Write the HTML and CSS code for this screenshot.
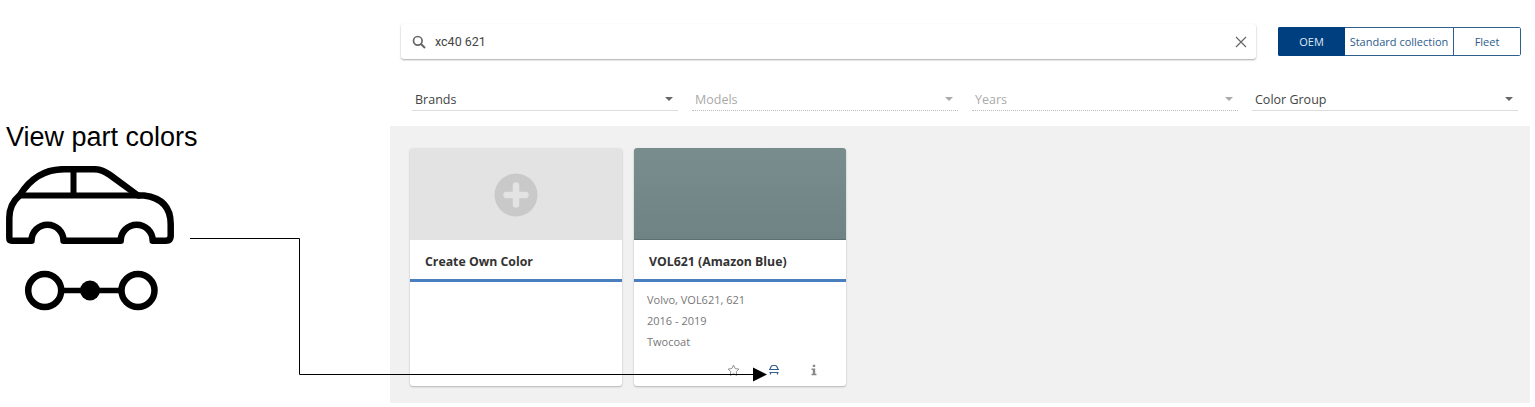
FILE: index.html
```html
<!DOCTYPE html>
<html lang="en">
<head>
  <meta charset="UTF-8">
  <title>View part colors</title>
  <link rel="stylesheet" href="styles.css">
</head>
<body>

<div class="page">
  <aside class="callout">
    <h2>View part colors</h2>
    <svg class="callout-car" viewBox="0 0 170 80" width="170" height="80">
      <path d="M25.500 74.700H6Q3.300 74.700 3.300 72V52Q3.300 38 14 29Q30 3.200 58 3.200H88Q96 3.200 104 9L132 29.500H138Q164.700 33 164.700 58V70Q164.700 74.700 160 74.700H146.700A16 16 0 0 0 114.700 74.700H57.500A16 16 0 0 0 25.500 74.700Z" fill="none" stroke="#000" stroke-width="6.500" stroke-linejoin="round"/>
      <path d="M13 29.500H134M67.500 3V30" fill="none" stroke="#000" stroke-width="6"/>
    </svg>
    <svg class="callout-parts" viewBox="0 0 136 42" width="136" height="42">
      <circle cx="20.700" cy="20.500" r="16.500" fill="none" stroke="#000" stroke-width="6.500"/>
      <circle cx="114" cy="20.500" r="16.500" fill="none" stroke="#000" stroke-width="6.500"/>
      <path d="M37 20.500H98" stroke="#000" stroke-width="5.500"/>
      <circle cx="66" cy="20.500" r="10"/>
    </svg>
  </aside>

  <main class="main">
    <div class="topbar">
      <div class="search">
        <svg class="search-icon" viewBox="0 0 14 14" width="14" height="14">
          <circle cx="5.800" cy="5.800" r="4.300" fill="none" stroke="#666" stroke-width="1.700"/>
          <path d="M9 9l4 4" stroke="#666" stroke-width="1.900"/>
        </svg>
        <span class="search-text">xc40 621</span>
        <svg class="search-clear" viewBox="0 0 12 12" width="12" height="12">
          <path d="M1 1l10 10M11 1L1 11" stroke="#666" stroke-width="1.200"/>
        </svg>
      </div>
      <div class="toggle">
        <button class="toggle-btn oem active">OEM</button>
        <button class="toggle-btn standard">Standard collection</button>
        <button class="toggle-btn fleet">Fleet</button>
      </div>
    </div>

    <div class="filters">
      <div class="filter"><span>Brands</span><i class="caret"></i></div>
      <div class="filter disabled"><span>Models</span><i class="caret"></i></div>
      <div class="filter disabled"><span>Years</span><i class="caret"></i></div>
      <div class="filter"><span>Color Group</span><i class="caret"></i></div>
    </div>

    <section class="results">
      <article class="card">
        <div class="swatch swatch-new">
          <svg viewBox="0 0 44 44" width="44" height="44">
            <circle cx="22" cy="22" r="21.500" fill="#c9c9c9"/>
            <path d="M22 12.500V31.500M12.500 22H31.500" stroke="#e3e3e3" stroke-width="6.500" stroke-linecap="round"/>
          </svg>
        </div>
        <h3 class="card-title">Create Own Color</h3>
      </article>

      <article class="card">
        <div class="swatch swatch-blue"></div>
        <h3 class="card-title title-blue">VOL621 (Amazon Blue)</h3>
        <div class="card-info">
          <p>Volvo, VOL621, 621</p>
          <p>2016 - 2019</p>
          <p>Twocoat</p>
        </div>
        <div class="card-actions">
          <svg class="action-star" viewBox="0 0 14 14" width="13" height="13">
            <path d="M7 1.200l1.800 3.700 4 .6-2.900 2.800.7 4L7 10.400l-3.600 1.900.7-4L1.200 5.500l4-.6z" fill="none" stroke="#888" stroke-width="1"/>
          </svg>
          <svg class="action-car" viewBox="0 0 12 12" width="12" height="12">
            <path d="M2 5L3.200 2.500Q3.800 1.500 5 1.500H7Q8.200 1.500 8.800 2.500L10 5M1 5.500H11M1.500 8.500H10.500M2.500 8V10.500M9.500 8V10.500" fill="none" stroke="#2f5f8f" stroke-width="1.200"/>
          </svg>
          <svg class="action-info" viewBox="0 0 8 12" width="8" height="12">
            <path d="M2.800 .8h2.400v2.200H2.800zM1.500 4.500h3.700v5.200h1.300v1.500h-5V9.700h1.300V6H1.500z" fill="#888"/>
          </svg>
        </div>
      </article>
    </section>
  </main>
</div>

<svg class="connector" viewBox="0 0 1535 407" width="1535" height="407">
  <path d="M190 238.500H299.500V374.500H760" fill="none" stroke="#000" stroke-width="1"/>
  <path d="M753 367.500L767 374.500 753 381.500Z"/>
</svg>

</body>
</html>
```

FILE: styles.css
```css
html, body {
  height: 100%;
}
body {
  margin: 0;
  background: #fff;
  font-family: 'Open Sans', sans-serif;
  color: #333;
  overflow: hidden;
}
.page {
  display: flex;
  height: 407px;
}
.callout {
  width: 390px;
  flex: none;
  padding: 122px 0 0 6px;
  box-sizing: border-box;
}
.callout h2 {
  margin: 0 0 14px;
  font: 400 27px/30px 'Liberation Sans', sans-serif;
  color: #000;
}
.callout svg {
  display: block;
}
.callout-parts {
  margin: 24px 0 0 18px;
}
.main {
  width: 1140px;
  flex: none;
}
.topbar {
  display: flex;
  align-items: center;
  height: 35px;
  margin: 24px 0 0 11px;
}
.search {
  display: flex;
  align-items: center;
  width: 855px;
  height: 35px;
  padding: 0 9px 0 11px;
  box-sizing: border-box;
  background: #fff;
  border-radius: 3px;
  box-shadow: 0 1px 2px rgba(0, 0, 0, 0.35);
}
.search-text {
  flex: 1;
  margin-left: 9px;
  font-family: Roboto, sans-serif;
  font-size: 12.500px;
  color: #444;
}
.toggle {
  display: flex;
  height: 29px;
  margin-left: 22px;
  border-radius: 2px;
  overflow: hidden;
}
.toggle-btn {
  padding: 0;
  height: 29px;
  background: #fff;
  border: 1px solid #2f5f8f;
  border-left: 0;
  color: #2c5c8c;
  font: 400 11px 'Open Sans', sans-serif;
}
.toggle-btn.oem {
  width: 67px;
  border-left: 1px solid #003f7f;
}
.toggle-btn.standard {
  width: 109px;
}
.toggle-btn.fleet {
  width: 67px;
  border-radius: 0 2px 2px 0;
}
.toggle-btn.active {
  background: #003f7f;
  border-color: #003f7f;
  color: #dfe8f2;
}
.filters {
  display: flex;
  gap: 14px;
  margin: 30px 0 0 22px;
}
.filter {
  display: flex;
  align-items: center;
  justify-content: space-between;
  width: 266px;
  height: 22px;
  padding: 0 5px 1px 3px;
  box-sizing: border-box;
  border-bottom: 1px solid #ddd;
  font-size: 12.500px;
  color: #444;
}
.filter.disabled {
  border-bottom: 1px dotted #bbb;
  color: #aaa;
}
.caret {
  width: 0;
  height: 0;
  border-left: 4px solid transparent;
  border-right: 4px solid transparent;
  border-top: 4px solid #666;
}
.filter.disabled .caret {
  border-top-color: #aaa;
}
.results {
  display: flex;
  gap: 12px;
  height: 277px;
  margin-top: 15px;
  padding: 22px 0 0 20px;
  box-sizing: border-box;
  background: #f1f1f1;
}
.card {
  position: relative;
  width: 212px;
  height: 238px;
  background: #fff;
  border-radius: 3px;
  box-shadow: 0 1px 2px rgba(0, 0, 0, 0.25);
  overflow: hidden;
}
.swatch {
  display: flex;
  align-items: center;
  justify-content: center;
  height: 92px;
  box-sizing: border-box;
}
.swatch-new {
  padding-top: 2px;
  background: #e3e3e3;
}
.swatch-blue {
  background: linear-gradient(#7a8d8e, #6f8284);
  border-bottom: 1px solid #5f7072;
}
.card-title {
  margin: 0;
  padding: 13px 0 0 15px;
  box-sizing: border-box;
  border-bottom: 3px solid #4a7fbf;
  height: 42px;
  font-size: 12.300px;
  line-height: 17px;
  font-weight: 700;
  color: #333;
}
.card-info {
  padding: 7px 0 0 13px;
  font-size: 11px;
  color: #777;
}
.card-info p {
  margin: 0;
  line-height: 21px;
}
.card-actions {
  position: absolute;
  left: 0;
  right: 0;
  bottom: 9px;
  height: 13px;
}
.card-actions svg {
  position: absolute;
  top: 0;
}
.action-star {
  left: 93px;
}
.action-car {
  left: 134px;
}
.action-info {
  left: 176px;
}
.connector {
  position: absolute;
  left: 0;
  top: 0;
  pointer-events: none;
}
```
